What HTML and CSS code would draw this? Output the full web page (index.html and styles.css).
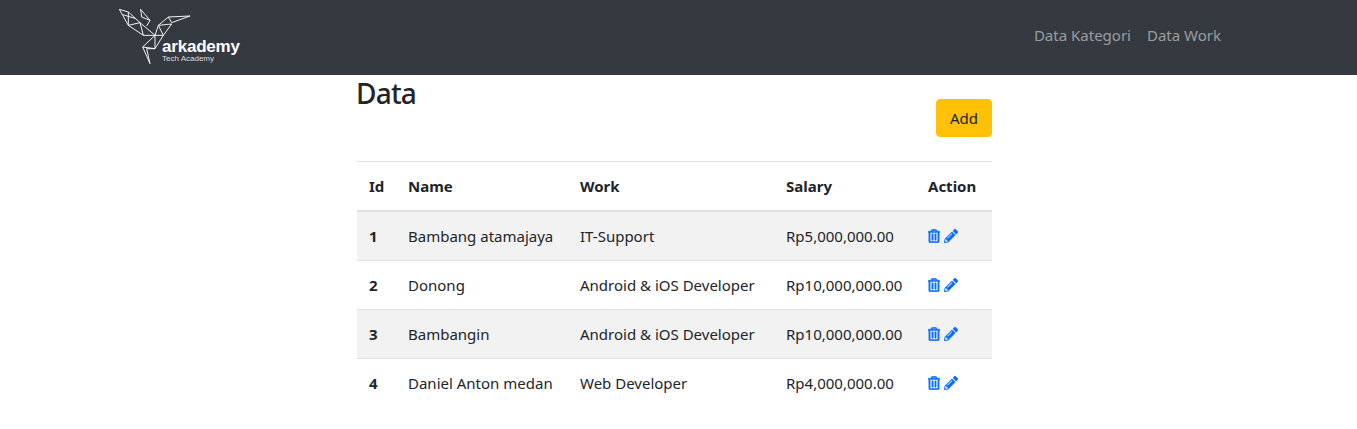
FILE: index.html
```html
<!DOCTYPE html>
<html lang="en">
<head>
  <meta charset="UTF-8">
  <meta name="viewport" content="width=device-width, initial-scale=1.0">
  <title>Data Work</title>
  <link rel="stylesheet" href="styles.css">
</head>
<body>

<svg class="defs" width="0" height="0">
  <symbol id="icon-trash" viewBox="0 0 448 512">
    <path d="M268 416h24a12 12 0 0 0 12-12V188a12 12 0 0 0-12-12h-24a12 12 0 0 0-12 12v216a12 12 0 0 0 12 12zM432 80h-82.41l-34-56.7A48 48 0 0 0 274.41 0H173.59a48 48 0 0 0-41.16 23.3L98.41 80H16A16 16 0 0 0 0 96v16a16 16 0 0 0 16 16h16v336a48 48 0 0 0 48 48h288a48 48 0 0 0 48-48V128h16a16 16 0 0 0 16-16V96a16 16 0 0 0-16-16zM171.84 50.91A6 6 0 0 1 177 48h94a6 6 0 0 1 5.15 2.91L293.61 80H154.39zM368 464H80V128h288zm-212-48h24a12 12 0 0 0 12-12V188a12 12 0 0 0-12-12h-24a12 12 0 0 0-12 12v216a12 12 0 0 0 12 12z"/>
  </symbol>
  <symbol id="icon-pencil" viewBox="0 0 512 512">
    <path d="M497.9 142.1l-46.1 46.1c-4.7 4.7-12.3 4.7-17 0l-111-111c-4.7-4.7-4.7-12.3 0-17l46.1-46.1c18.7-18.7 49.1-18.7 67.9 0l60.1 60.1c18.8 18.7 18.8 49.1 0 67.9zM284.2 99.8L21.6 362.4.4 483.9c-2.9 16.4 11.4 30.6 27.8 27.8l121.5-21.3 262.6-262.6c4.7-4.7 4.7-12.3 0-17l-111-111c-4.8-4.7-12.4-4.7-17.1 0zM124.1 339.9c-5.5-5.5-5.5-14.3 0-19.8l154-154c5.5-5.5 14.3-5.5 19.8 0s5.5 14.3 0 19.8l-154 154c-5.5 5.5-14.3 5.5-19.8 0zM88 424h48v36.3l-64.5 11.3-31.1-31.1L51.7 376H88v48z"/>
  </symbol>
</svg>

<nav class="navbar">
  <a class="brand" href="#">
    <svg class="logo" width="124" height="62" viewBox="51 15 372 186">
      <g class="bird">
        <path d="M58 22L85 30L120 62L165 100L130 100L85 70L58 22"/>
        <path d="M85 30L85 70M120 62L130 100M85 70L120 62M68 38L108 50"/>
        <path d="M122 22L150 55L125 45L122 22M150 55L140 72"/>
        <path d="M165 100L175 70L205 45L270 42L215 62L205 45"/>
        <path d="M175 70L215 66L190 100L165 100M175 70L190 100"/>
        <path d="M165 100L128 135L150 185L140 140L165 140L190 100M165 100L165 140M128 135L165 140"/>
      </g>
      <text class="logo-name" x="186" y="151">arkademy</text>
      <text class="logo-sub" x="186" y="178">Tech Academy</text>
    </svg>
  </a>
  <div class="nav-links">
    <a href="#">Data Kategori</a>
    <a href="#">Data Work</a>
  </div>
</nav>

<div class="container">
  <div class="head-row">
    <h2>Data</h2>
    <button class="add-button">Add</button>
  </div>

  <table>
    <colgroup>
      <col class="col-id">
      <col class="col-name">
      <col class="col-work">
      <col class="col-salary">
      <col class="col-action">
    </colgroup>
    <thead>
      <tr><th>Id</th><th>Name</th><th>Work</th><th>Salary</th><th>Action</th></tr>
    </thead>
    <tbody>
      <tr>
        <th>1</th><td>Bambang atamajaya</td><td>IT-Support</td><td>Rp5,000,000.00</td>
        <td><a class="act" href="#"><svg class="ic-trash"><use href="#icon-trash"/></svg></a> <a class="act" href="#"><svg class="ic-pencil"><use href="#icon-pencil"/></svg></a></td>
      </tr>
      <tr>
        <th>2</th><td>Donong</td><td>Android &amp; iOS Developer</td><td>Rp10,000,000.00</td>
        <td><a class="act" href="#"><svg class="ic-trash"><use href="#icon-trash"/></svg></a> <a class="act" href="#"><svg class="ic-pencil"><use href="#icon-pencil"/></svg></a></td>
      </tr>
      <tr>
        <th>3</th><td>Bambangin</td><td>Android &amp; iOS Developer</td><td>Rp10,000,000.00</td>
        <td><a class="act" href="#"><svg class="ic-trash"><use href="#icon-trash"/></svg></a> <a class="act" href="#"><svg class="ic-pencil"><use href="#icon-pencil"/></svg></a></td>
      </tr>
      <tr>
        <th>4</th><td>Daniel Anton medan</td><td>Web Developer</td><td>Rp4,000,000.00</td>
        <td><a class="act" href="#"><svg class="ic-trash"><use href="#icon-trash"/></svg></a> <a class="act" href="#"><svg class="ic-pencil"><use href="#icon-pencil"/></svg></a></td>
      </tr>
    </tbody>
  </table>
</div>

</body>
</html>
```

FILE: styles.css
```css
body {
  font-family: "Noto Sans", "Open Sans", Arial, sans-serif;
  font-size: 15px;
  line-height: 24px;
  margin: 0;
  padding: 0;
  background-color: #fff;
  color: #212529;
}
a {
  text-decoration: none;
}
.defs {
  display: block;
  height: 0;
}
.navbar {
  height: 75px;
  background-color: #343a40;
  display: flex;
  align-items: center;
  justify-content: space-between;
  padding: 0 136px 6px 117px;
  box-sizing: border-box;
}
.brand {
  display: flex;
  margin-top: 6px;
}
.bird path {
  fill: none;
  stroke: #fff;
  stroke-width: 2.8;
  stroke-linejoin: round;
}
.logo-name {
  font-family: "Liberation Sans", Arial, sans-serif;
  font-size: 51px;
  font-weight: 700;
  fill: #fff;
  letter-spacing: -0.6px;
}
.logo-sub {
  font-family: "Liberation Sans", Arial, sans-serif;
  font-size: 24px;
  fill: #ddd;
}
.nav-links {
  display: flex;
  gap: 16px;
}
.nav-links a {
  color: rgba(255, 255, 255, 0.5);
}
.container {
  width: 635px;
  margin: 0 365px 0 357px;
}
.head-row {
  display: flex;
  justify-content: space-between;
  height: 86px;
}
h2 {
  margin: 0 0 0 -1px;
  font-size: 28px;
  line-height: 36px;
  font-weight: 500;
  letter-spacing: -0.8px;
}
.add-button {
  width: 56px;
  height: 38px;
  margin-top: 24px;
  padding: 0;
  font-family: inherit;
  font-size: 15px;
  color: #212529;
  background-color: #ffc107;
  border: 1px solid #ffc107;
  border-radius: 4px;
  cursor: pointer;
}
table {
  width: 100%;
  border-collapse: collapse;
  table-layout: fixed;
}
.col-id { width: 39px; }
.col-name { width: 172px; }
.col-work { width: 206px; }
.col-salary { width: 142px; }
.col-action { width: 76px; }
th, td {
  padding: 12px;
  height: 49px;
  box-sizing: border-box;
  text-align: left;
  border-top: 1px solid #dee2e6;
  white-space: nowrap;
}
thead th {
  border-bottom: 2px solid #dee2e6;
  font-weight: 700;
}
tbody tr:nth-child(odd) {
  background-color: #f2f2f2;
}
tbody th {
  font-weight: 700;
}
.act {
  color: #0d6efd;
}
.ic-trash, .ic-pencil {
  height: 14px;
  fill: #0d6efd;
  vertical-align: -1px;
}
.ic-trash {
  width: 12px;
  stroke: #0d6efd;
  stroke-width: 20;
}
.ic-pencil {
  width: 14px;
}
```
